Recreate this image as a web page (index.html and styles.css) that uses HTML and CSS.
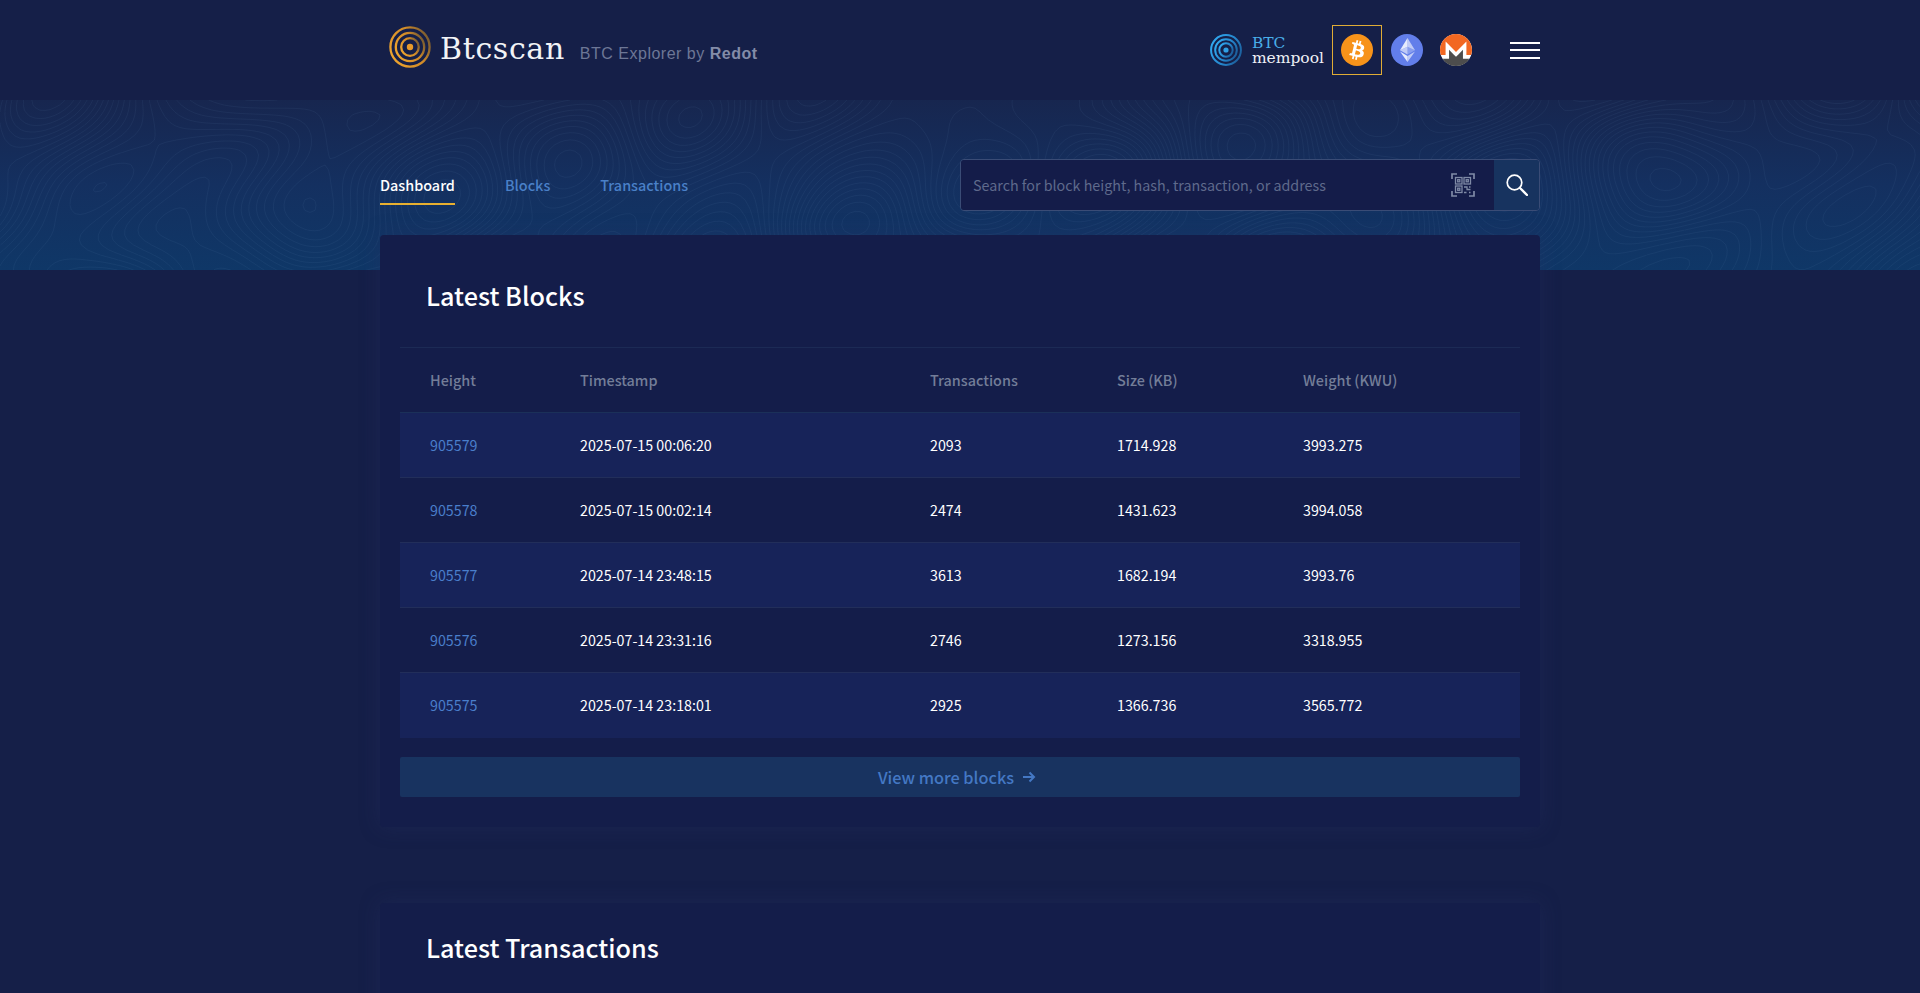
FILE: index.html
```html
<!DOCTYPE html>
<html lang="en">
<head>
<meta charset="utf-8">
<title>Btcscan</title>
<link rel="stylesheet" href="styles.css">
</head>
<body>
<header class="topbar">
  <div class="wrap topbar-in">
    <a class="brand">
      <svg class="brand-mark" viewBox="0 0 42 42" fill="none">
        <defs><linearGradient id="og" x1="0" y1=".7" x2="1" y2=".2"><stop offset="0" stop-color="#eda32e"/><stop offset=".6" stop-color="#d08a28"/><stop offset="1" stop-color="#6f5632"/></linearGradient></defs>
        <g stroke="url(#og)" stroke-width="2.300">
          <circle cx="21" cy="21" r="19.600"/>
          <circle cx="21" cy="21" r="14.200"/>
          <circle cx="21" cy="21" r="8.800"/>
        </g>
        <circle cx="21" cy="21" r="3.200" fill="#e79a2b"/>
      </svg>
      <span class="brand-name">Btcscan</span>
      <span class="brand-tag">BTC Explorer by <b>Redot</b></span>
    </a>
    <div class="chains">
      <a class="mempool">
        <svg class="mempool-mark" viewBox="0 0 42 42" fill="none">
          <defs><linearGradient id="bg" x1="0" y1=".3" x2="1" y2=".8"><stop offset="0" stop-color="#30a8f0"/><stop offset=".6" stop-color="#2482c8"/><stop offset="1" stop-color="#1b5a96"/></linearGradient></defs>
          <g stroke="url(#bg)" stroke-width="2.600">
            <circle cx="21" cy="21" r="19.600"/>
            <circle cx="21" cy="21" r="14.200"/>
            <circle cx="21" cy="21" r="8.800"/>
          </g>
          <circle cx="21" cy="21" r="3.400" fill="#2f9fe4"/>
        </svg>
        <span class="mempool-text"><span class="mempool-btc">BTC</span><span>mempool</span></span>
      </a>
      <a class="chain chain-active">
        <svg class="coin" viewBox="0 0 32 32"><circle cx="16" cy="16" r="16" fill="#f7931a"/><path fill="#fff" d="M23.189 14.02c.314-2.096-1.283-3.223-3.465-3.975l.708-2.84-1.728-.43-.69 2.765c-.454-.114-.92-.22-1.385-.326l.695-2.783L15.596 6l-.708 2.839c-.376-.086-.746-.17-1.104-.26l.002-.009-2.384-.595-.46 1.846s1.283.294 1.256.312c.7.175.826.638.805 1.006l-.806 3.235c.048.012.11.03.18.057l-.183-.045-1.13 4.532c-.086.212-.303.531-.793.41.018.025-1.256-.313-1.256-.313l-.858 1.978 2.25.561c.418.105.828.215 1.231.318l-.715 2.872 1.727.43.708-2.84c.472.127.93.245 1.378.357l-.706 2.828 1.728.43.715-2.866c2.948.558 5.164.333 6.097-2.333.752-2.146-.037-3.385-1.588-4.192 1.13-.26 1.98-1.003 2.207-2.538zm-3.95 5.538c-.533 2.147-4.148.986-5.32.695l.95-3.805c1.172.293 4.929.872 4.37 3.11zm.535-5.569c-.487 1.953-3.495.96-4.47.717l.86-3.45c.975.243 4.118.696 3.61 2.733z"/></svg>
      </a>
      <a class="chain">
        <svg class="coin" viewBox="0 0 32 32"><circle cx="16" cy="16" r="16" fill="#627eea"/><g fill="#fff"><path fill-opacity=".6" d="M16.500 4v8.870l7.500 3.350z"/><path fill-opacity=".85" d="M16.500 4L9 16.220l7.500-3.350z"/><path fill-opacity=".6" d="M16.500 21.970v6.030L24 17.620z"/><path fill-opacity=".85" d="M16.500 28v-6.030L9 17.620z"/><path fill-opacity=".25" d="M16.500 20.570l7.500-4.350-7.500-3.350z"/><path fill-opacity=".6" d="M9 16.220l7.500 4.350v-7.700z"/></g></svg>
      </a>
      <a class="chain">
        <svg class="coin" viewBox="0 0 32 32"><circle cx="16" cy="16" r="16" fill="#fff"/><path fill="#f26822" d="M16 0C7.160 0 0 7.160 0 16c0 1.770.280 3.470.810 5.060h4.780V7.600L16 18.020 26.410 7.600v13.460h4.780c.530-1.590.810-3.290.810-5.060C32 7.160 24.840 0 16 0z"/><path fill="#4d4d4d" d="M13.600 20.390l-4.550-4.550v8.790H2.550A16 16 0 0 0 16 32a16 16 0 0 0 13.450-7.370h-6.500v-8.790l-4.550 4.550L16 22.790z"/></svg>
      </a>
      <button class="menu-btn" aria-label="Menu"><i></i><i></i><i></i></button>
    </div>
  </div>
</header>

<section class="band">
  <svg class="contours" aria-hidden="true" width="100%" height="100%"><path id="contour-lines"/></svg>
  <div class="wrap band-in">
    <nav class="tabs">
      <a class="tab tab-on">Dashboard</a>
      <a class="tab">Blocks</a>
      <a class="tab">Transactions</a>
    </nav>
    <form class="search">
      <div class="search-field">
        <span class="search-hint">Search for block height, hash, transaction, or address</span>
        <svg class="qr" viewBox="0 0 24 24" fill="none" stroke="#7f8aa6">
          <path stroke-width="1.700" d="M1 6V1h5M18 1h5v5M1 18v5h5M23 18v5h-5"/>
          <g stroke-width="1.300">
            <rect x="4.500" y="4.500" width="6.500" height="6.500"/><rect x="13" y="4.500" width="6.500" height="6.500"/><rect x="4.500" y="13" width="6.500" height="6.500"/>
            <rect x="6.700" y="6.700" width="2.100" height="2.100"/><rect x="15.200" y="6.700" width="2.100" height="2.100"/><rect x="6.700" y="15.200" width="2.100" height="2.100"/>
            <path d="M13 14h3v2.500h3.500M13 19.500h2.500M18 14h1.500M18 19.500h1.500"/>
          </g>
        </svg>
      </div>
      <button class="search-go" type="button" aria-label="Search">
        <svg viewBox="0 0 22 22" fill="none" stroke="#fff" stroke-linecap="round"><circle cx="8.500" cy="8.500" r="7.300" stroke-width="1.700"/><path d="M14 14l7 7" stroke-width="2.300"/></svg>
      </button>
    </form>
  </div>
</section>

<main class="wrap content">
  <section class="card">
    <h2 class="card-title">Latest Blocks</h2>
    <table class="grid">
      <colgroup><col class="c1"><col class="c2"><col class="c3"><col class="c4"><col></colgroup>
      <thead><tr><th>Height</th><th>Timestamp</th><th>Transactions</th><th>Size (KB)</th><th>Weight (KWU)</th></tr></thead>
      <tbody>
        <tr><td><a>905579</a></td><td>2025-07-15 00:06:20</td><td>2093</td><td>1714.928</td><td>3993.275</td></tr>
        <tr><td><a>905578</a></td><td>2025-07-15 00:02:14</td><td>2474</td><td>1431.623</td><td>3994.058</td></tr>
        <tr><td><a>905577</a></td><td>2025-07-14 23:48:15</td><td>3613</td><td>1682.194</td><td>3993.76</td></tr>
        <tr><td><a>905576</a></td><td>2025-07-14 23:31:16</td><td>2746</td><td>1273.156</td><td>3318.955</td></tr>
        <tr><td><a>905575</a></td><td>2025-07-14 23:18:01</td><td>2925</td><td>1366.736</td><td>3565.772</td></tr>
      </tbody>
    </table>
    <a class="more">View more blocks
      <svg viewBox="0 0 14 14" fill="none" stroke="currentColor" stroke-width="2"><path d="M1 7h11M7.500 2.500 12 7l-4.500 4.500"/></svg>
    </a>
  </section>
  <section class="card">
    <h2 class="card-title card-title-flush">Latest Transactions</h2>
  </section>
</main>
<script src="contours.js"></script>
</body>
</html>
```
FILE: styles.css
```css
* { box-sizing: border-box; }
html, body { margin: 0; height: 100%; overflow: hidden; }
body {
  background: #151f48;
  color: #fff;
  font-family: "Noto Sans CJK SC", "Noto Sans", sans-serif;
  font-size: 14.25px;
}
.wrap { width: 1160px; margin: 0 auto; }

.topbar { height: 100px; }
.topbar-in { height: 100%; display: flex; align-items: center; justify-content: space-between; }
.brand { display: flex; align-items: center; margin-left: 9px; margin-top: -6px; }
.brand-mark { width: 42px; height: 42px; flex: none; }
.brand-name {
  margin-left: 9px;
  margin-top: 2px;
  font-family: "DejaVu Serif", "Liberation Serif", serif;
  font-size: 30px;
  letter-spacing: .65px;
  color: #f2f3f6;
}
.brand-tag {
  margin-left: 15px;
  margin-top: 14px;
  font-family: "Liberation Sans", Arial, sans-serif;
  font-size: 16px;
  letter-spacing: .5px;
  color: #6d7796;
}
.brand-tag b { color: #838ca8; }

.chains { display: flex; align-items: center; }
.mempool { display: flex; align-items: center; margin-right: 8px; }
.mempool-mark { width: 32px; height: 32px; }
.mempool-text {
  display: flex; flex-direction: column;
  margin-left: 10px;
  margin-top: 1px;
  font-family: "DejaVu Serif", serif;
  font-size: 15.5px;
  line-height: 15px;
  color: #eef0f5;
}
.mempool-btc { color: #49aee8; }
.chain { display: flex; align-items: center; justify-content: center; width: 50px; height: 50px; border: 1px solid transparent; margin-right: -1px; }
.chain-active { border-color: #e0ac36; margin-right: 0; }
.coin { width: 32px; height: 32px; display: block; }
.menu-btn { display: flex; flex-direction: column; justify-content: space-between; width: 30px; height: 17px; padding: 0; margin-left: 30px; background: none; border: 0; }
.menu-btn i { display: block; height: 2px; background: #fff; }

.band {
  position: relative;
  height: 170px;
  background: linear-gradient(180deg, #17264f 0%, #143060 50%, #0f3767 100%);
}
.contours { position: absolute; inset: 0; }
.contours path { fill: none; stroke: #7ba4d0; stroke-width: .6; stroke-opacity: .13; }
.band-in { position: relative; display: flex; justify-content: space-between; padding-top: 59px; }
.tabs { display: flex; gap: 50px; height: 46px; }
.tab { height: 46px; line-height: 51px; font-size: 14.4px; font-weight: 500; color: #4a80c8; }
.tab-on { color: #fff; border-bottom: 2px solid #e8b030; }
.search {
  display: flex; width: 580px; height: 52px;
  border: 1px solid #3a4c76; border-radius: 4px; overflow: hidden;
}
.search-field { flex: 1; display: flex; align-items: center; justify-content: space-between; padding: 0 19px 0 12px; background: #141c49; }
.search-hint { font-size: 14.3px; margin-top: -1px; color: #5f6a8c; }
.qr { width: 24px; height: 24px; }
.search-go { width: 45px; background: #17335f; border: 0; padding: 0; display: flex; align-items: center; justify-content: center; }
.search-go svg { width: 22px; height: 22px; }

.content { margin-top: -35px; position: relative; }
.card {
  height: 592px;
  margin-bottom: 76px;
  padding: 0 20px;
  background: #141d4a;
  border-radius: 4px;
  box-shadow: 0 0 20px rgba(40, 50, 100, .35);
}
.card-title { margin: 0; height: 112px; padding: 0 26px; line-height: 120px; font-size: 25.2px; font-weight: 500; color: #fff; }
.card-title-flush { line-height: 88px; }
.grid { width: 1120px; border-collapse: collapse; table-layout: fixed; }
.c1 { width: 180px; } .c2 { width: 350px; } .c3 { width: 187px; } .c4 { width: 186px; }
.grid th, .grid td { height: 65px; padding: 0 0 2px; text-align: left; }
.grid th:first-child, .grid td:first-child { padding-left: 30px; }
.grid thead tr { border-top: 1px solid #1c2a55; border-bottom: 1px solid #1b3059; }
.grid th { font-size: 14.4px; font-weight: 500; color: #737d98; }
.grid td { font-size: 14.25px; color: #fff; }
.grid td a { color: #4a7ecb; }
.grid tbody tr { border-bottom: 1px solid #222e5a; }
.grid tbody tr:nth-child(odd) { background: #172359; }
.grid tbody tr:last-child { border-bottom: 0; }
.more {
  display: flex; align-items: center; justify-content: center; gap: 8px;
  height: 40px; margin-top: 19px; padding-right: 6px;
  background: #183360; border-radius: 2px;
  font-size: 16.3px; font-weight: 500; color: #4478c4;
}
.more svg { width: 14px; height: 14px; }
```
FILE: contours.js
```js
// Draws the faint topographic lines of the header band (marching squares over a smooth field).
(function () {
  var W = 1920, H = 170, S = 5, STEP = 0.3;
  var waves = [
    [190, 70, 0.4, 1.0], [-120, 160, 2.1, 0.9], [340, 240, 1.2, 1.3],
    [-90, -110, 4.0, 0.55], [70, -150, 5.2, 0.5], [520, -300, 0.7, 1.1]
  ];
  function field(x, y) {
    var v = 0;
    for (var i = 0; i < waves.length; i++) {
      var w = waves[i];
      var kx = 6.283 * w[0] / (w[0] * w[0] + w[1] * w[1]);
      var ky = 6.283 * w[1] / (w[0] * w[0] + w[1] * w[1]);
      v += w[3] * Math.sin(kx * x + ky * y + w[2] + 0.6 * Math.sin(y / 47 + x / 131));
    }
    return v;
  }
  var cols = Math.ceil(W / S) + 1, rows = Math.ceil(H / S) + 1, vals = [];
  for (var r = 0; r <= rows; r++) {
    vals[r] = [];
    for (var c = 0; c <= cols; c++) vals[r][c] = field(c * S, r * S);
  }
  function lerp(a, b, l) { return (l - a) / (b - a); }
  var d = [];
  for (var level = -4.5; level <= 4.5; level += STEP) {
    for (r = 0; r < rows; r++) {
      for (c = 0; c < cols; c++) {
        var a = vals[r][c], b = vals[r][c + 1], e = vals[r + 1][c + 1], f = vals[r + 1][c], pts = [];
        var x = c * S, y = r * S;
        if ((a < level) !== (b < level)) pts.push([x + S * lerp(a, b, level), y]);
        if ((b < level) !== (e < level)) pts.push([x + S, y + S * lerp(b, e, level)]);
        if ((f < level) !== (e < level)) pts.push([x + S * lerp(f, e, level), y + S]);
        if ((a < level) !== (f < level)) pts.push([x, y + S * lerp(a, f, level)]);
        for (var i = 0; i + 1 < pts.length; i += 2) {
          d.push('M' + pts[i][0].toFixed(1) + ' ' + pts[i][1].toFixed(1) + 'L' + pts[i + 1][0].toFixed(1) + ' ' + pts[i + 1][1].toFixed(1));
        }
      }
    }
  }
  document.getElementById('contour-lines').setAttribute('d', d.join(''));
})();
```
